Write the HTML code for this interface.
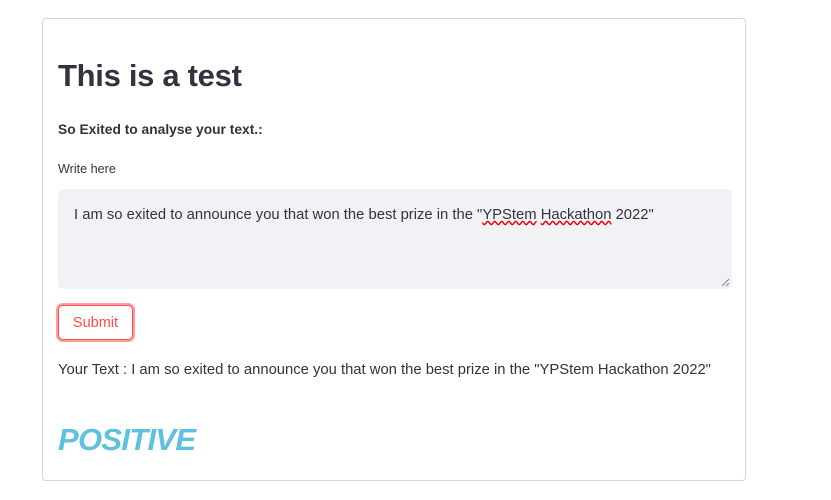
<!DOCTYPE html>
<html><head><style>
body{margin:0;background:#fff;font-family:"Liberation Sans",sans-serif;color:#31333f;width:831px;height:500px;position:relative;overflow:hidden}
.card{position:absolute;left:42px;top:18px;width:702px;height:461px;border:1px solid #d6d6d9;border-radius:4px}
.a{position:absolute;white-space:nowrap}
</style></head><body>
<div class="card"></div>
<div class="a" style="left:58px;top:58px;font-size:31px;font-weight:bold;letter-spacing:-0.3px">This is a test</div>
<div class="a" style="left:58px;top:122px;font-size:13.8px;font-weight:bold">So Exited to analyse your text.:</div>
<div class="a" style="left:58px;top:162px;font-size:12.6px">Write here</div>
<div class="a" style="left:58px;top:189px;width:674px;height:100px;background:#f0f2f6;border-radius:6px"></div>
<div class="a" style="left:74px;top:207px;font-size:14.8px">I am so exited to announce you that won the best prize in the "<span style="text-decoration:underline wavy #e00">YPStem</span> <span style="text-decoration:underline wavy #e00">Hackathon</span> 2022"</div>
<svg class="a" style="left:720px;top:277px" width="10" height="10"><path d="M9 2L2 9M9 6L6 9" stroke="#888" stroke-width="1"/></svg>
<div class="a" style="left:58px;top:305px;width:75px;height:35px;border:1px solid #ff4b4b;border-radius:5px;box-shadow:0 0 0 2px #ff9c9c;box-sizing:border-box;color:#ff4b4b;font-size:14.5px;text-align:center;line-height:34px">Submit</div>
<div class="a" style="left:58px;top:362px;font-size:14.8px">Your Text : I am so exited to announce you that won the best prize in the "YPStem Hackathon 2022"</div>
<div class="a" style="left:58px;top:422px;font-size:31px;font-weight:bold;font-style:italic;color:#5fc1df;letter-spacing:-0.7px">POSITIVE</div>
</body></html>
